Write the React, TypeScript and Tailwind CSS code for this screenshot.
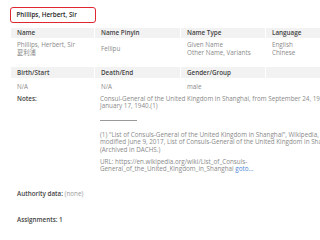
import React from "react";

const head = "text-[#444] font-semibold";
const val = "text-[#8a8a8a]";

export default function App() {
  return (
    <div
      className="w-[320px] h-[240px] overflow-hidden bg-white text-[6.3px] leading-[7.5px]"
      style={{ fontFamily: '"Open Sans", "Noto Sans CJK SC", sans-serif' }}
    >
      <div className="pt-[7px] pl-[10px]">
        <div className="w-[86px] h-[16px] border-[1.5px] border-[#e0262f] rounded-[3px] flex items-center pl-[5.5px] text-[#222] font-semibold">
          Phillips, Herbert, Sir
        </div>
      </div>

      <div className="ml-[11px] mt-[5px] w-[309px] grid grid-cols-[83px_85px_84px_1fr] gap-x-px">
        <div className={`bg-[#f2f2f2] h-[10px] flex items-center pl-[6px] ${head}`}>Name</div>
        <div className={`bg-[#f2f2f2] h-[10px] flex items-center pl-[6px] ${head}`}>Name Pinyin</div>
        <div className={`bg-[#f2f2f2] h-[10px] flex items-center pl-[6px] ${head}`}>Name Type</div>
        <div className={`bg-[#f2f2f2] h-[10px] flex items-center pl-[6px] ${head}`}>Language</div>

        <div className={`pl-[6px] pt-[3px] ${val} whitespace-nowrap`}>
          <div>Phillips, Herbert, Sir</div>
          <div>夏利浦</div>
        </div>
        <div className={`pl-[6px] pt-[3px] ${val} flex items-center`}>Fellipu</div>
        <div className={`pl-[6px] pt-[3px] ${val} whitespace-nowrap`}>
          <div>Given Name</div>
          <div>Other Name, Variants</div>
        </div>
        <div className={`pl-[6px] pt-[3px] ${val}`}>
          <div>English</div>
          <div>Chinese</div>
        </div>
      </div>

      <div className="ml-[11px] mt-[11px] w-[309px] grid grid-cols-[83px_85px_84px_1fr] gap-x-px">
        <div className={`bg-[#f2f2f2] h-[11px] flex items-center pl-[6px] ${head}`}>Birth/Start</div>
        <div className={`bg-[#f2f2f2] h-[11px] flex items-center pl-[6px] ${head}`}>Death/End</div>
        <div className={`bg-[#f2f2f2] h-[11px] flex items-center pl-[6px] ${head}`}>Gender/Group</div>
        <div className="bg-[#f2f2f2] h-[11px]"></div>
        <div className={`pl-[6px] pt-[5px] ${val}`}>N/A</div>
        <div className={`pl-[6px] pt-[5px] ${val}`}>N/A</div>
        <div className={`pl-[6px] pt-[5px] ${val}`}>male</div>
        <div></div>
      </div>

      <div className="ml-[11px] mt-[4px] grid grid-cols-[89px_1fr]">
        <div className={`pl-[6px] ${head}`}>Notes:</div>
        <div className={`${val} whitespace-nowrap`}>
          <div>Consul-General of the United Kingdom in Shanghai, from September 24, 1937, to</div>
          <div>January 17, 1940.(1)</div>
          <div className="mt-[10px] w-[37px] border-t border-[#9a9a9a]"></div>
          <div className="mt-[10px]">(1) "List of Consuls-General of the United Kingdom in Shanghai", Wikipedia, last</div>
          <div>modified June 9, 2017, List of Consuls-General of the United Kingdom in Shanghai</div>
          <div>(Archived in DACHS.)</div>
          <div className="mt-[4.5px]">URL: https://en.wikipedia.org/wiki/List_of_Consuls-</div>
          <div>
            General_of_the_United_Kingdom_in_Shanghai <span className="text-[#4a7fd4]">goto...</span>
          </div>
        </div>
      </div>

      <div className={`ml-[17px] mt-[17px] ${head}`}>
        Authority data: <span className="text-[#9a9a9a] font-normal">(none)</span>
      </div>
      <div className={`ml-[17px] mt-[19px] ${head}`}>Assignments: 1</div>
    </div>
  );
}
